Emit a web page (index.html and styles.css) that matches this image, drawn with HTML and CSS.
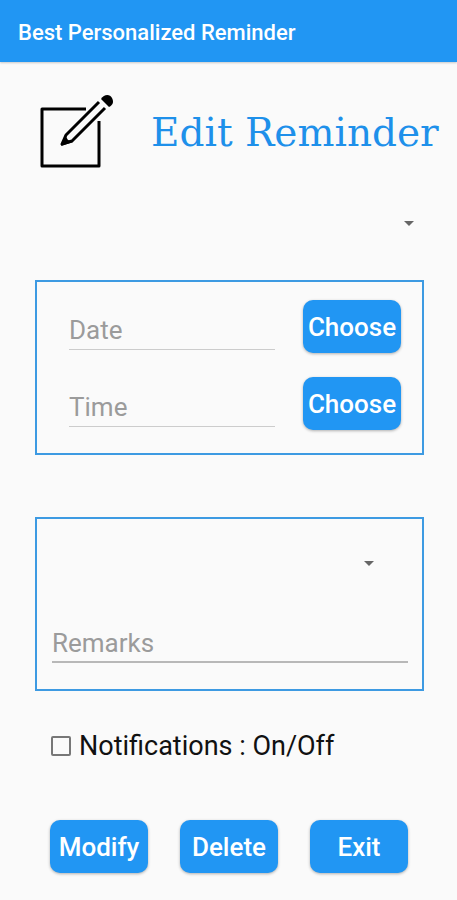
FILE: index.html
```html
<!DOCTYPE html>
<html lang="en">
<head>
<meta charset="utf-8">
<meta name="viewport" content="width=device-width, initial-scale=1">
<title>Best Personalized Reminder</title>
<link rel="stylesheet" href="styles.css">
</head>
<body>
<header class="app-bar">Best Personalized Reminder</header>
<main>
  <div class="title-row">
    <svg class="edit-icon" viewBox="0 0 76 74" aria-hidden="true">
      <path d="M47 15H3V72H60V27" fill="none" stroke="#000" stroke-width="3" stroke-linejoin="round"/>
      <path d="M60 8L27 41L23 50L33 47L66 14" fill="none" stroke="#000" stroke-width="3" stroke-linejoin="round"/>
      <path d="M26 41L22 52L34 48L29 46Z"/>
      <path d="M62 5C65 0 71 0 73 4C75 8 74 11 70 13Z"/>
    </svg>
    <h1>Edit Reminder</h1>
  </div>
  <form class="reminder-form">
    <div class="spinner">
      <select aria-label="Reminder"><option></option></select>
    </div>
    <section class="panel schedule">
      <input class="field" type="text" placeholder="Date" aria-label="Date">
      <button class="btn" type="button">Choose</button>
      <input class="field" type="text" placeholder="Time" aria-label="Time">
      <button class="btn" type="button">Choose</button>
    </section>
    <section class="panel details">
      <div class="spinner category">
        <select aria-label="Category"><option></option></select>
      </div>
      <input class="field remarks" type="text" placeholder="Remarks" aria-label="Remarks">
    </section>
    <label class="notify"><input type="checkbox"><span>Notifications : On/Off</span></label>
    <div class="actions">
      <button class="btn" type="button">Modify</button>
      <button class="btn" type="button">Delete</button>
      <button class="btn" type="button">Exit</button>
    </div>
  </form>
</main>
</body>
</html>
```
FILE: styles.css
```css
* {
  box-sizing: border-box;
}

body {
  margin: 0;
  background: #fafafa;
  color: #111;
  font-family: Roboto, "Liberation Sans", sans-serif;
  font-size: 26px;
}

.app-bar {
  padding: 18px 18px 14px;
  background: #2196f3;
  box-shadow: 0 1px 2px rgba(0, 0, 0, 0.2);
  color: #fff;
  font-size: 22px;
  font-weight: 500;
  line-height: 30px;
}

.title-row {
  display: flex;
  align-items: center;
  gap: 36px;
  padding: 32px 0 0 39px;
}

.edit-icon {
  flex: none;
  width: 76px;
  height: 74px;
}

h1 {
  margin: 0;
  padding-top: 4px;
  color: #1e90ea;
  font-family: "DejaVu Serif", serif;
  font-size: 39px;
  font-weight: 400;
  line-height: 48px;
  white-space: nowrap;
}

.reminder-form {
  display: flex;
  flex-direction: column;
  padding: 32px 33px 24px 35px;
}

.spinner {
  position: relative;
  height: 48px;
}

.spinner::after {
  position: absolute;
  top: 21px;
  right: 10px;
  border: 5px solid transparent;
  border-top-color: #666;
  border-bottom: 0;
  content: "";
  pointer-events: none;
}

.spinner select {
  width: 100%;
  height: 100%;
  border: 0;
  background: transparent;
  appearance: none;
  font: inherit;
}

.panel {
  border: 2px solid #3d9ae2;
}

.schedule {
  display: grid;
  grid-template-columns: 1fr 98px;
  gap: 24px 28px;
  margin-top: 32px;
  padding: 18px 21px 23px 32px;
}

.field {
  width: 100%;
  min-width: 0;
  height: 50px;
  padding: 10px 0 0;
  border: 0;
  border-bottom: 1px solid #ccc;
  background: transparent;
  color: #111;
  font: inherit;
}

.field::placeholder {
  color: #9b9b9b;
  opacity: 1;
}

.btn {
  height: 53px;
  padding: 0;
  border: 0;
  border-radius: 10px;
  background: #2196f3;
  box-shadow: 0 1px 3px rgba(0, 0, 0, 0.3);
  color: #fff;
  font: inherit;
  font-weight: 500;
}

.details {
  margin-top: 62px;
  padding: 21px 14px 26px 15px;
}

.category {
  margin-right: 24px;
}

.remarks {
  height: 52px;
  margin-top: 23px;
  padding-top: 14px;
  border-bottom: 2px solid #b8b8b8;
}

.notify {
  display: flex;
  align-items: center;
  gap: 8px;
  margin: 39px 0 0 16px;
  font-size: 27px;
  line-height: 32px;
}

.notify input {
  width: 20px;
  height: 20px;
  margin: 0;
  border: 2px solid #777;
  border-radius: 2px;
  appearance: none;
}

.notify input:checked {
  background: #2196f3;
}

.actions {
  display: grid;
  grid-template-columns: repeat(3, 1fr);
  gap: 32px;
  margin: 58px 16px 0 15px;
}
```
